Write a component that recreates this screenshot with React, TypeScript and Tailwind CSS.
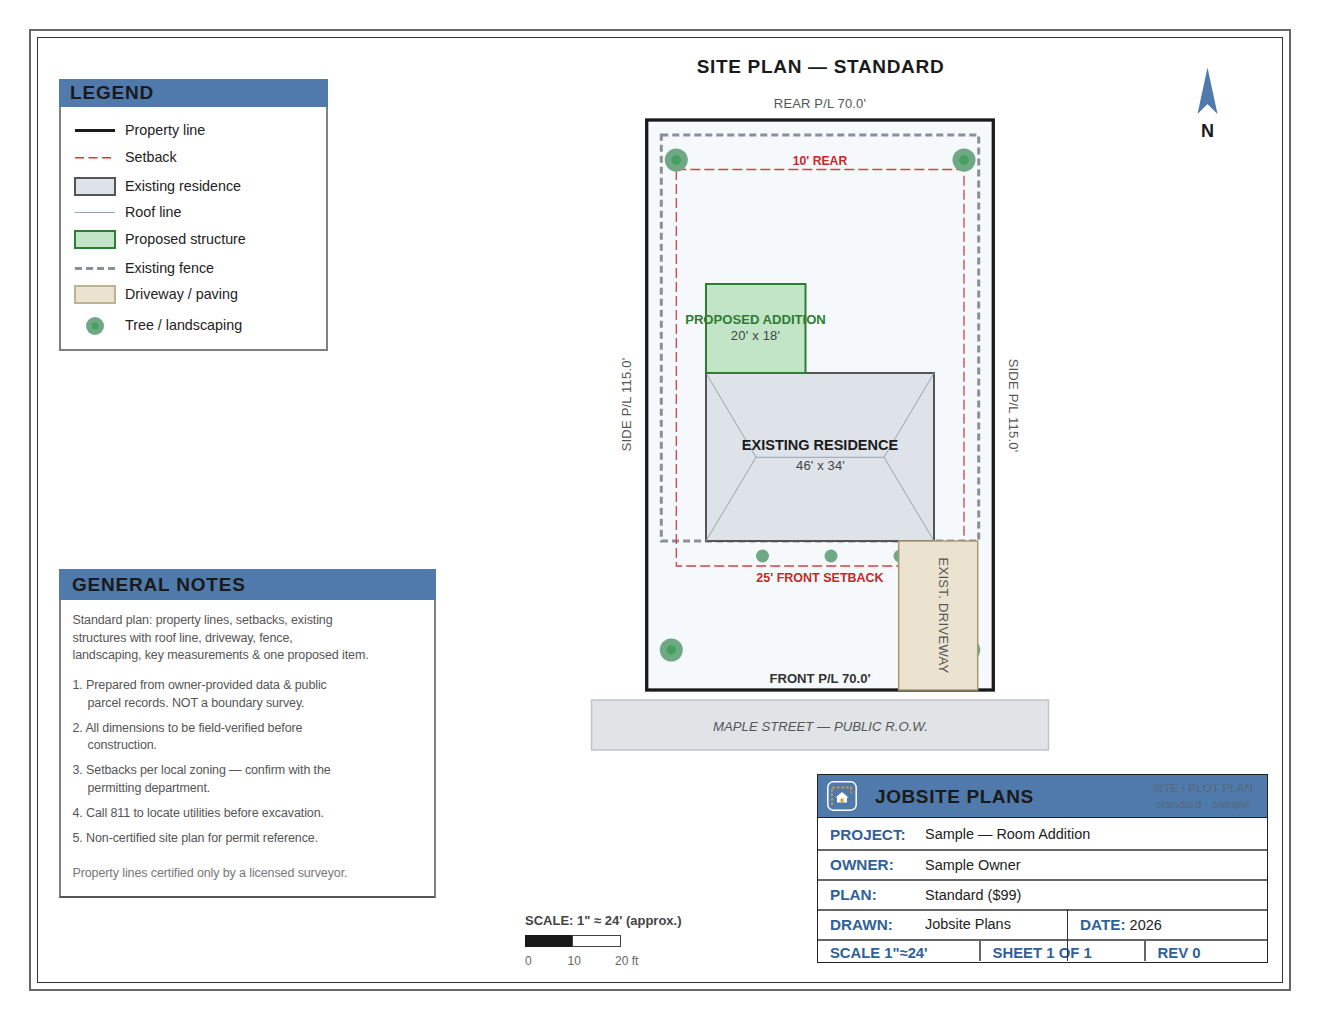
import React from "react";

const sans = "font-['Liberation_Sans',Arial,sans-serif]";

function Dash({ color, w, y, dash }: { color: string; w: number; y: number; dash: string }) {
  return (
    <svg width="40" height="6" className="block">
      <line x1="0" y1={y} x2="40" y2={y} stroke={color} strokeWidth={w} strokeDasharray={dash} />
    </svg>
  );
}

function Legend() {
  return (
    <section className="w-[269px] h-[272px] flex flex-col bg-white">
      <h2 className="h-[28px] bg-[#4f7aab] pl-[11px] text-[19px] leading-[27px] font-bold tracking-[0.8px] text-[#1a1a1a]">LEGEND</h2>
      <div className="flex-1 border-x-2 border-b-2 border-[#808080] text-[14.3px] text-[#222] pl-[14px]">
        <div className="h-[16px] mt-[16px] flex items-center">
          <div className="w-[40px] h-[3px] mb-[1px] bg-[#1a1a1a]" />
          <span className="ml-[10px]">Property line</span>
        </div>
        <div className="h-[16px] mt-[11px] flex items-center">
          <Dash color="#d03a3a" w={1.5} y={2.75} dash="9 4.5" />
          <span className="ml-[10px]">Setback</span>
        </div>
        <div className="h-[16px] mt-[13px] flex items-center">
          <div className="w-[42px] h-[19px] -ml-[1px] mb-[2px] border-2 border-[#555] bg-[#dde3e9] shrink-0" />
          <span className="ml-[9px]">Existing residence</span>
        </div>
        <div className="h-[16px] mt-[10px] flex items-center">
          <div className="w-[40px] h-px mb-[1px] bg-[#8fa3bd]" />
          <span className="ml-[10px]">Roof line</span>
        </div>
        <div className="h-[16px] mt-[11px] flex items-center">
          <div className="w-[42px] h-[19px] -ml-[1px] mb-[2px] border-2 border-[#2e7d32] bg-[#c2e5c8] shrink-0" />
          <span className="ml-[9px]">Proposed structure</span>
        </div>
        <div className="h-[16px] mt-[13px] flex items-center">
          <Dash color="#8a8f98" w={3} y={2.5} dash="7 4" />
          <span className="ml-[10px]">Existing fence</span>
        </div>
        <div className="h-[16px] mt-[10px] flex items-center">
          <div className="w-[42px] h-[19px] -ml-[1px] mb-[2px] border-2 border-[#bdb196] bg-[#ebe3d0] shrink-0" />
          <span className="ml-[9px]">Driveway / paving</span>
        </div>
        <div className="h-[16px] mt-[15px] flex items-center">
          <svg width="40" height="18" className="block shrink-0">
            <circle cx="20" cy="9" r="9" fill="#6fa884" />
            <circle cx="20" cy="9" r="3.5" fill="#45a05f" />
          </svg>
          <span className="ml-[10px]">Tree / landscaping</span>
        </div>
      </div>
    </section>
  );
}

function Notes() {
  return (
    <section className="w-[377px] h-[329px] flex flex-col bg-white mt-[218px]">
      <h2 className="h-[31px] bg-[#4f7aab] pl-[13px] text-[19px] leading-[31px] font-bold tracking-[0.8px] text-[#1a1a1a]">GENERAL NOTES</h2>
      <div className="flex-1 border-x-2 border-b-2 border-x-[#808080] border-b-[#555] pl-[11.5px] text-[12.5px] leading-[17.5px] text-[#555] tracking-[-0.11px]">
        <p className="mt-[12px]">
          Standard plan: property lines, setbacks, existing<br />
          structures with roof line, driveway, fence,<br />
          landscaping, key measurements &amp; one proposed item.
        </p>
        <p className="mt-[12.5px]">
          1. Prepared from owner-provided data &amp; public<br />
          <span className="pl-[15px]">parcel records. NOT a boundary survey.</span>
        </p>
        <p className="mt-[7.5px]">
          2. All dimensions to be field-verified before<br />
          <span className="pl-[15px]">construction.</span>
        </p>
        <p className="mt-[7.5px]">
          3. Setbacks per local zoning — confirm with the<br />
          <span className="pl-[15px]">permitting department.</span>
        </p>
        <p className="mt-[7.5px]">4. Call 811 to locate utilities before excavation.</p>
        <p className="mt-[7.5px]">5. Non-certified site plan for permit reference.</p>
        <p className="mt-[17.5px] text-[#777]">Property lines certified only by a licensed surveyor.</p>
      </div>
    </section>
  );
}

function Plan() {
  const font = "Liberation Sans, Arial, sans-serif";
  return (
    <svg width="846" height="716" viewBox="436 38 846 716" className="block" fontFamily={font}>
      <text x="820.5" y="72.5" textAnchor="middle" fontSize="19" fontWeight="700" letterSpacing="0.68" fill="#1a1a1a">SITE PLAN — STANDARD</text>
      <text x="820" y="107.5" textAnchor="middle" fontSize="13" letterSpacing="0.15" fill="#555">REAR P/L 70.0'</text>
      <polygon points="1207.5,67.5 1217.5,114 1207.5,104 1197.5,114" fill="#4f7aab" />
      <text x="1207.5" y="137" textAnchor="middle" fontSize="18" fontWeight="700" fill="#1a1a1a">N</text>

      <rect x="646.7" y="120" width="346.6" height="570" fill="#f5f9fc" stroke="#1a1a1a" strokeWidth="3.3" />
      <rect x="661.3" y="135" width="317.4" height="406" fill="none" stroke="#8a8f98" strokeWidth="3" strokeDasharray="7 4" />
      <rect x="676.3" y="169.5" width="287.7" height="396.5" fill="none" stroke="#cc4444" strokeWidth="1.3" strokeDasharray="10 4" />

      <circle cx="676.3" cy="160" r="11.5" fill="#6fa884" /><circle cx="676.3" cy="160" r="4.8" fill="#45a05f" />
      <circle cx="964" cy="160" r="11.5" fill="#6fa884" /><circle cx="964" cy="160" r="4.8" fill="#45a05f" />
      <circle cx="671.3" cy="650" r="11.5" fill="#6fa884" /><circle cx="671.3" cy="650" r="4.8" fill="#45a05f" />
      <circle cx="968.7" cy="650" r="11.5" fill="#6fa884" /><circle cx="968.7" cy="650" r="4.8" fill="#45a05f" />
      <circle cx="762.5" cy="556" r="6.5" fill="#6fa884" />
      <circle cx="831" cy="556" r="6.5" fill="#6fa884" />
      <circle cx="900" cy="556" r="6.5" fill="#6fa884" />

      <text x="820" y="165" textAnchor="middle" fontSize="12.2" fontWeight="700" fill="#c62828">10' REAR</text>

      <rect x="706" y="373" width="228" height="168" fill="#dde3e9" stroke="#555" strokeWidth="2" />
      <path d="M706 373 L756 457.3 H884 L934 373 M706 541 L756 457.3 M884 457.3 L934 541" fill="none" stroke="#9aa3ad" strokeWidth="1" />
      <rect x="706" y="284" width="99.5" height="89" fill="#c2e5c8" stroke="#2e7d32" strokeWidth="2" />
      <text x="755.5" y="324" textAnchor="middle" fontSize="13.1" fontWeight="700" fill="#2e7d32">PROPOSED ADDITION</text>
      <text x="755.5" y="340" textAnchor="middle" fontSize="13" letterSpacing="0.2" fill="#444">20' x 18'</text>
      <text x="820" y="450" textAnchor="middle" fontSize="14.5" fontWeight="700" fill="#1a1a1a">EXISTING RESIDENCE</text>
      <text x="820.5" y="470" textAnchor="middle" fontSize="13" letterSpacing="0.15" fill="#444">46' x 34'</text>

      <rect x="898.7" y="541" width="79" height="149" fill="#ebe3d0" stroke="#a89a78" strokeWidth="1.5" />
      <text transform="translate(938.5 615.5) rotate(90)" textAnchor="middle" fontSize="13" letterSpacing="0.33" fill="#555">EXIST. DRIVEWAY</text>

      <text x="820" y="582" textAnchor="middle" fontSize="12.5" fontWeight="700" fill="#c62828">25' FRONT SETBACK</text>
      <text x="820" y="682.5" textAnchor="middle" fontSize="13.1" fontWeight="700" fill="#333">FRONT P/L 70.0'</text>
      <text transform="translate(631 404.5) rotate(-90)" textAnchor="middle" fontSize="13" letterSpacing="0.2" fill="#555">SIDE P/L 115.0'</text>
      <text transform="translate(1008.5 405.5) rotate(90)" textAnchor="middle" fontSize="13" letterSpacing="0.2" fill="#555">SIDE P/L 115.0'</text>

      <rect x="591.5" y="700" width="457" height="50" fill="#e1e4e7" stroke="#c0c4cb" strokeWidth="1.5" />
      <text x="820.5" y="731" textAnchor="middle" fontSize="13.2" fontStyle="italic" fill="#555">MAPLE STREET — PUBLIC R.O.W.</text>
    </svg>
  );
}

function Logo() {
  return (
    <svg width="30" height="30" viewBox="0 0 30 30" className="block shrink-0">
      <rect x="0.8" y="0.8" width="28.4" height="28.4" rx="5.5" fill="#4f7aab" stroke="#fff" strokeWidth="1.5" />
      <path d="M5 24 V6.5 H24 V12" fill="none" stroke="#e09a2b" strokeWidth="1.8" strokeDasharray="2.5 2" />
      <path d="M15 11 L21.5 16.5 H20 V21.5 H10 V16.5 H8.5 Z" fill="#fff" />
      <rect x="13.5" y="17.5" width="3" height="4" fill="#e09a2b" />
    </svg>
  );
}

const labelCls = "font-bold text-[15.3px] text-[#2f6199]";
const lastCls = "font-bold text-[14.9px] text-[#2f6199]";

function Row({ label, value }: { label: string; value: string }) {
  return (
    <div className="h-[30px] pt-[1px] border-t-2 border-[#666] flex items-center pl-[12px]">
      <span className={`${labelCls} w-[95px]`}>{label}</span>
      <span>{value}</span>
    </div>
  );
}

function TitleBlock() {
  return (
    <section className="w-[451px] h-[189px] border border-[#222] bg-white text-[14.45px] text-[#222]">
      <header className="h-[43px] bg-[#4f7aab] border-b border-[#222] flex items-center pl-[9px] pr-[14px]">
        <Logo />
        <span className="ml-[18px] mt-[3px] text-[19px] font-bold tracking-[0.6px] text-[#1a1a1a]">JOBSITE PLANS</span>
        <div className="ml-auto text-[11.8px] leading-[16px] text-center text-[#56687d]">
          <div>SITE / PLOT PLAN</div>
          <div>standard · sample</div>
        </div>
      </header>
      <div className="h-[31px] pt-[3px] flex items-center pl-[12px]">
        <span className={`${labelCls} w-[95px]`}>PROJECT:</span>
        <span>Sample — Room Addition</span>
      </div>
      <Row label="OWNER:" value="Sample Owner" />
      <Row label="PLAN:" value="Standard ($99)" />
      <div className="h-[30px] border-t-2 border-[#666] flex items-center">
        <div className="w-[249px] pl-[12px] flex">
          <span className={`${labelCls} w-[95px]`}>DRAWN:</span>
          <span>Jobsite Plans</span>
        </div>
        <div className="pl-[13px]"><span className={labelCls}>DATE:</span> 2026</div>
      </div>
      <div className="relative h-[22px] border-t-2 border-[#666] flex items-center">
        <div className="font-bold text-[14.8px] text-[#2f6199] w-[163px] h-full pl-[12px] leading-[24px] border-r-2 border-[#666]">SCALE 1"≈24'</div>
        <div className={`${lastCls} w-[165px] h-full pl-[11.5px] leading-[24px] border-r-2 border-[#666]`}>SHEET 1 OF 1</div>
        <div className={`${lastCls} pl-[11.5px] leading-[24px] h-full`}>REV 0</div>
        <div className="absolute left-[249px] -top-[32px] bottom-0 w-px bg-[#333]" />
      </div>
    </section>
  );
}

function Scale() {
  return (
    <div className="mt-[138px]">
      <div className="text-[13px] leading-[18px] font-bold text-[#444]">SCALE: 1" ≈ 24' (approx.)</div>
      <div className="mt-[5px] w-[96px] h-[12px] flex">
        <div className="w-[47px] bg-[#1a1a1a]" />
        <div className="flex-1 bg-white border border-[#444]" />
      </div>
      <div className="mt-[7px] flex text-[12px] leading-[14px] text-[#666]">
        <span className="w-[42.5px]">0</span>
        <span className="w-[47.5px]">10</span>
        <span>20 ft</span>
      </div>
    </div>
  );
}

export default function App() {
  return (
    <div className={`${sans} w-[1320px] h-[1020px] bg-white p-[29px]`}>
      <div className="h-full border-2 border-[#666] p-[6px]">
        <div className="h-full border border-[#333] flex">
          <div className="w-[398px] shrink-0 pl-[21px] pt-[41px]">
            <Legend />
            <Notes />
          </div>
          <div className="flex-1 flex flex-col">
            <Plan />
            <div className="flex justify-between mt-[20px] pl-[89px] pr-[14px]">
              <Scale />
              <TitleBlock />
            </div>
          </div>
        </div>
      </div>
    </div>
  );
}
